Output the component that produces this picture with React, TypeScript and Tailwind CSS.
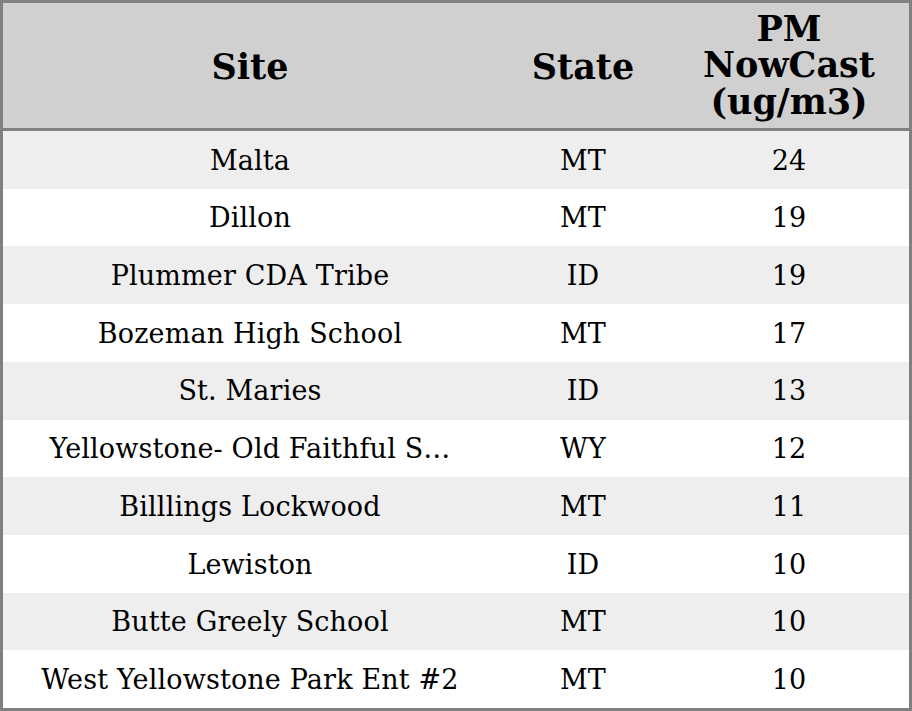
const rows: [string, string, number][] = [
  ['Malta', 'MT', 24],
  ['Dillon', 'MT', 19],
  ['Plummer CDA Tribe', 'ID', 19],
  ['Bozeman High School', 'MT', 17],
  ['St. Maries', 'ID', 13],
  ['Yellowstone- Old Faithful S…', 'WY', 12],
  ['Billlings Lockwood', 'MT', 11],
  ['Lewiston', 'ID', 10],
  ['Butte Greely School', 'MT', 10],
  ['West Yellowstone Park Ent #2', 'MT', 10],
]

const cols = 'grid grid-cols-[494px_172px_240px]'

export default function App() {
  return (
    <div className="flex h-[711px] w-[912px] flex-col border-[3px] border-[#808080] bg-white font-['DejaVu_Serif',serif] text-black">
      <div className={`${cols} h-[128px] shrink-0 items-center border-b-[3px] border-[#808080] bg-[#d0d0d0] text-[35px] font-bold leading-[36.5px]`}>
        <div className="pt-[3px] text-center">Site</div>
        <div className="pt-[3px] text-center">State</div>
        <div className="text-center">
          PM
          <br />
          NowCast
          <br />
          (ug/m3)
        </div>
      </div>
      <div className="flex flex-1 flex-col text-[27px] tracking-[0.15px]">
        {rows.map(([site, state, pm], i) => (
          <div
            key={site}
            className={`${cols} flex-1 items-center pt-[2px] ${i % 2 === 0 ? 'bg-[#eeeeee]' : 'bg-white'}`}
          >
            <div className="truncate text-center">{site}</div>
            <div className="text-center">{state}</div>
            <div className="text-center">{pm}</div>
          </div>
        ))}
      </div>
    </div>
  )
}
